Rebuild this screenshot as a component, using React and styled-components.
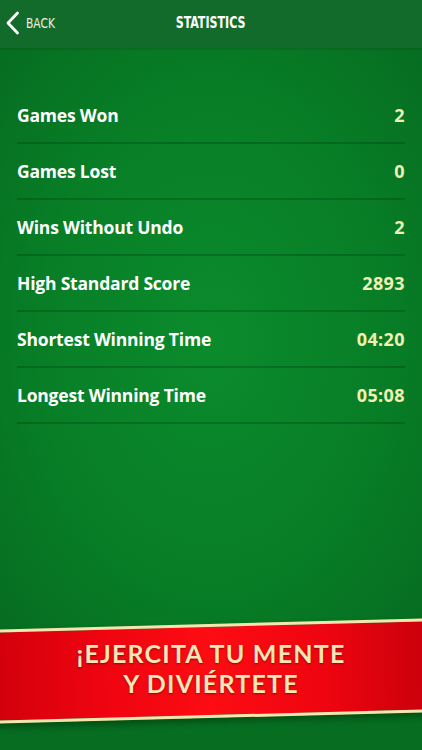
import styled, { createGlobalStyle } from 'styled-components';

const GlobalStyle = createGlobalStyle`
    html, body { margin: 0; padding: 0; }
    body { background: #087a25; }
`;

const stats = [
    { label: 'Games Won', value: '2' },
    { label: 'Games Lost', value: '0' },
    { label: 'Wins Without Undo', value: '2' },
    { label: 'High Standard Score', value: '2893' },
    { label: 'Shortest Winning Time', value: '04:20' },
    { label: 'Longest Winning Time', value: '05:08' },
];

const App = () => {
    return (
        <Screen>
            <GlobalStyle />
            <Header>
                <BackButton>
                    <svg width="15" height="24" viewBox="0 0 15 24">
                        <path d="M12.5 2 L3 12 L12.5 22" fill="none" stroke="#fff" strokeWidth="2.8" strokeLinecap="round" strokeLinejoin="round" />
                    </svg>
                    <span>BACK</span>
                </BackButton>
                <Title>STATISTICS</Title>
            </Header>

            <StatList>
                {stats.map((s) => (
                    <StatRow key={s.label}>
                        <Label>{s.label}</Label>
                        <Value>{s.value}</Value>
                    </StatRow>
                ))}
            </StatList>

            <Ribbon>
                <RibbonText>¡EJERCITA TU MENTE<br />Y DIVIÉRTETE</RibbonText>
            </Ribbon>
        </Screen>
    );
};

export default App;

const Screen = styled.div`
    width: 422px;
    height: 750px;
    overflow: hidden;
    display: flex;
    flex-direction: column;
    background: radial-gradient(ellipse 70% 55% at 50% 45%, #0b8b2c 0%, #087f27 55%, #066d21 100%);
    font-family: "Open Sans", "Liberation Sans", sans-serif;
`;

const Header = styled.div`
    height: 48px;
    flex-shrink: 0;
    position: relative;
    display: flex;
    align-items: center;
    justify-content: center;
    background: #136b2b;
    box-shadow: 0 1px 2px rgba(0, 0, 0, 0.15);
`;

const BackButton = styled.div`
    position: absolute;
    left: 5px;
    top: 11px;
    display: flex;
    align-items: center;
    gap: 6px;
    color: #e8f2e0;
    font-family: "DejaVu Sans Condensed", "DejaVu Sans", sans-serif;
    font-size: 14px;
    font-weight: 400;
    span { transform: scaleX(0.85); transform-origin: left center; }
`;

const Title = styled.div`
    color: #fff;
    font-family: "DejaVu Sans Condensed", "DejaVu Sans", sans-serif;
    font-weight: 700;
    font-size: 15px;
    transform: scaleX(0.82);
    margin-top: -2px;
`;

const StatList = styled.div`
    padding: 40px 17px 0;
    display: flex;
    flex-direction: column;
`;

const StatRow = styled.div`
    height: 54px;
    display: flex;
    align-items: center;
    justify-content: space-between;
    border-bottom: 2px solid rgba(0, 50, 10, 0.28);
`;

const Label = styled.div`
    color: #fff;
    font-weight: 700;
    font-size: 17.5px;
    letter-spacing: -0.2px;
`;

const Value = styled.div`
    color: #f1f0b2;
    font-weight: 700;
    font-size: 18px;
    letter-spacing: 0.4px;
`;

const Ribbon = styled.div`
    margin-top: auto;
    margin-bottom: 32px;
    height: 94px;
    position: relative;
    display: flex;
    align-items: center;
    justify-content: center;

    &::before {
        content: '';
        position: absolute;
        left: -10px;
        right: -10px;
        top: 0;
        bottom: 0;
        transform: rotate(-1.5deg);
        background: linear-gradient(90deg, #d0000b 0%, #ee0410 25%, #fd0c13 50%, #ef0510 75%, #c8000b 100%);
        border-top: 3px solid #f7e5b0;
        border-bottom: 3px solid #f7e5b0;
        box-shadow: 0 4px 6px rgba(0, 40, 0, 0.45);
    }
`;

const RibbonText = styled.div`
    position: relative;
    text-align: center;
    color: #f8e6b6;
    font-family: "Lato", "Liberation Sans", sans-serif;
    font-weight: 700;
    font-size: 25px;
    line-height: 30px;
    letter-spacing: 1.2px;
    text-shadow: 0 1px 2px rgba(90, 0, 0, 0.6);
    margin-top: -6px;
`;
